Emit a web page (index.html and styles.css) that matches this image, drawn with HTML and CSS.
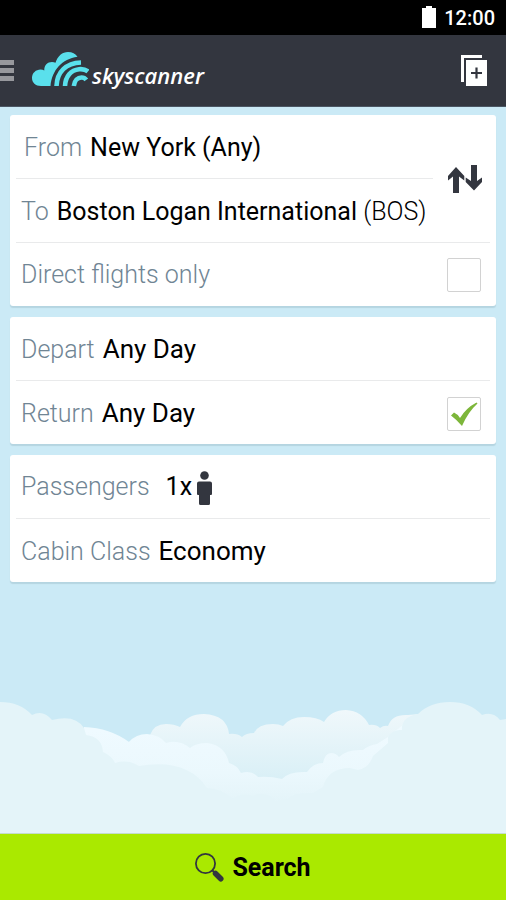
FILE: index.html
```html
<!DOCTYPE html>
<html lang="en">
<head>
<meta charset="utf-8">
<meta name="viewport" content="width=device-width, initial-scale=1">
<title>Skyscanner flight search</title>
<link rel="stylesheet" href="styles.css">
</head>
<body>
<div class="status">
  <svg class="battery" width="14" height="22" viewBox="0 0 14 22" aria-hidden="true"><path d="M4 0h6v2h4v20H0V2h4z" fill="#fff"/></svg>
  <time>12:00</time>
</div>
<header class="appbar">
  <button class="menu" type="button" aria-label="Menu"><span></span><span></span><span></span></button>
  <a class="brand" href="#">
    <svg width="57" height="36" viewBox="0 0 57 36" aria-hidden="true">
      <path d="M9 35C3.500 35 0 31.500 0 27c0-5 4-8.500 8.500-8.500 1.500 0 2.700.300 3.800.900C12 14.500 15.500 11 20 11c1.300 0 2.500.300 3.500.800C25.500 5 30.500 1 36 1c4.200 0 7.600 1.800 9.500 4.700C30 8 20 19 18.500 35z" fill="#5ae0ec"/>
      <g fill="none" stroke="#5ae0ec" stroke-width="4.600">
        <path d="M24.500 35C25 21 34 12 49 11.500"/>
        <path d="M33 35c.500-9.500 6-16 14-16.800 4-.400 7 .600 9 2.300"/>
        <path d="M41.800 35c.700-5.500 4-8.500 7.700-8.500 2 0 3.600.700 4.800 2.400"/>
      </g>
    </svg>
    <span>skyscanner</span>
  </a>
  <button class="add" type="button" aria-label="New search">
    <svg width="26" height="32" viewBox="0 0 26 32" aria-hidden="true">
      <path d="M0 0h21v3H3v24H0z" fill="#fff"/><path d="M5 5h21v26H5z" fill="#fff"/>
      <path d="M15.500 12.500v11M10 18h11" stroke="#33363f" stroke-width="2.200"/>
    </svg>
  </button>
</header>
<main>
  <section class="card route">
    <button class="row from" type="button"><span class="label">From</span> <span class="value">New York (Any)</span></button>
    <button class="row to" type="button"><span class="label">To</span> <span class="value">Boston Logan International <span class="code">(BOS)</span></span></button>
    <button class="swap" type="button" aria-label="Swap origin and destination">
      <svg width="34" height="28" viewBox="0 0 34 28" fill="#33363f" aria-hidden="true">
        <path d="M8 2l8.300 9v4.500L11 11.500V28H5V11.500L0 15.500V11z"/>
        <path d="M26 25.500l-8.300-8.500v-4.500L23 16V0h6v16l5-3.500V17z"/>
      </svg>
    </button>
    <label class="row direct"><span class="label">Direct flights only</span><input type="checkbox"></label>
  </section>
  <section class="card">
    <button class="row" type="button"><span class="label">Depart</span> <span class="value">Any Day</span></button>
    <div class="row split">
      <button class="plain" type="button"><span class="label">Return</span> <span class="value">Any Day</span></button>
      <input type="checkbox" checked aria-label="Return flight">
    </div>
  </section>
  <section class="card">
    <button class="row" type="button"><span class="label">Passengers</span> <span class="value count">1x</span>
      <svg class="person" width="15" height="34" viewBox="0 0 15 34" fill="#33363f" aria-hidden="true"><circle cx="7.500" cy="4.500" r="4.300"/><path d="M2 10.500h11q2 0 2 2V23q0 1-1 1h-1v8.500q0 1.500-1.500 1.500h-8Q2 34 2 32.500V24H1q-1 0-1-1V12.500q0-2 2-2z"/></svg>
    </button>
    <button class="row" type="button"><span class="label">Cabin Class</span> <span class="value">Economy</span></button>
  </section>
</main>
<svg class="clouds" viewBox="0 0 506 143" preserveAspectRatio="none" aria-hidden="true">
  <defs>
    <linearGradient id="back" gradientUnits="userSpaceOnUse" x1="0" y1="20" x2="0" y2="92"><stop offset="0" stop-color="#f0f8fb"/><stop offset="1" stop-color="#d8eff6"/></linearGradient>
    <linearGradient id="mid" gradientUnits="userSpaceOnUse" x1="0" y1="40" x2="0" y2="112"><stop offset="0" stop-color="#effaff"/><stop offset=".600" stop-color="#ebf8fd"/><stop offset="1" stop-color="#e4f4f9"/></linearGradient>
  </defs>
  <path fill="url(#back)" d="M128 100V52L150 45Q154 34 166 34Q174 34 180 37Q187 24 204 24Q227 25 229 44Q237 43 242 47Q246 43 254 43Q258 34 273 34Q279 34 283 36Q290 27 304 27Q317 27 324 32Q331 20 346 20Q362 21 369 35Q376 34 380 38Q384 35 388 36Q392 24 408 25L420 24V100Z"/>
  <path fill="url(#mid)" d="M84 37Q110 38 129 52Q136 44 147 44Q160 45 166 53Q179 49 190 58Q196 53 207 53Q225 55 229 73Q237 75 241 83Q252 80 258 87Q270 86 282 89Q289 81 307 82Q313 73 323 73Q325 63 331 63Q336 63 339 67Q347 59 363 60Q369 55 377 54Q383 50 388 47L404 34V143H84Z"/>
  <path fill="#e4f4f9" d="M0 12Q20 12 32 25Q43 19 52 30Q75 24 84 38L86 45Q102 47 103 62Q112 66 115 73Q128 69 139 76Q187 68 207 98Q224 99 232 109Q242 102 253 106Q261 101 272 107L275 111L288 109Q293 102 313 103L323 97Q328 78 350 78L358 80Q369 78 373 66L388 53V47Q393 39 402 40Q401 27 418 24Q430 12 450 12Q470 12 482 25Q493 21 500 30L506 29V143H0Z"/>
</svg>
<button class="search" type="submit">
  <svg width="29" height="29" viewBox="0 0 29 29" fill="none" stroke="#33363f" aria-hidden="true"><circle cx="10.500" cy="10.500" r="9.600" stroke-width="1.800"/><path d="M17 17l4 4" stroke-width="2"/><path d="M20.500 20.500l5.300 5.300" stroke-width="5.500" stroke-linecap="round"/></svg>
  <span>Search</span>
</button>
</body>
</html>
```
FILE: styles.css
```css
* { box-sizing: border-box; }

body {
  margin: 0;
  min-height: 100vh;
  display: flex;
  flex-direction: column;
  background: #cbeaf6;
  font-family: Roboto, "Liberation Sans", sans-serif;
  color: #000;
}

button {
  font: inherit;
  color: inherit;
  border: 0;
  padding: 0;
  background: none;
  text-align: left;
  cursor: pointer;
}

svg { display: block; flex: none; }

.status {
  height: 35px;
  display: flex;
  align-items: center;
  justify-content: flex-end;
  gap: 8px;
  padding: 0 11px;
  background: #000;
  color: #fff;
  font-size: 20px;
  font-weight: 500;
}

.battery { margin-bottom: 2px; }

.appbar {
  height: 72px;
  display: flex;
  align-items: center;
  padding-right: 19px;
  background: #33363f;
  border-bottom: 1px solid #4b5663;
}

.menu {
  display: grid;
  gap: 3px;
  width: 14px;
}

.menu span { height: 5px; background: #97989d; }

.brand {
  display: flex;
  align-items: center;
  gap: 3px;
  margin-left: 18px;
  padding-bottom: 3px;
  color: #fff;
  text-decoration: none;
  font: italic 600 22px/30px "Open Sans", sans-serif;
}

.brand span { padding-top: 12px; }

.add { margin-left: auto; }

main {
  display: grid;
  gap: 11px;
  padding: 8px 10px;
}

.card {
  background: #fff;
  border-radius: 3px;
  box-shadow: 0 2px 1px #b5d5e1;
  font-size: 26px;
  line-height: 32px;
  padding: 0 6px;
}

.row {
  display: flex;
  flex-wrap: wrap;
  align-content: center;
  align-items: baseline;
  width: 100%;
  min-height: 64px;
  padding: 2px 9px 0 5px;
  gap: 8px;
  border-bottom: 1px solid #e9eaeb;
}

.row:last-child { min-height: 63px; border-bottom: 0; }

.label { font-size: 25px; font-weight: 300; color: #708594; }
.value { font-weight: 400; }
.code { font-weight: 300; }

.route {
  display: grid;
  grid-template-columns: 1fr 57px;
  font-size: 25px;
}

.route .row { padding-top: 3px; padding-right: 0; }
.route .from { padding-left: 8px; }
.to, .direct { grid-column: 1 / -1; }
.swap { grid-area: 1 / 2 / 3 / 3; justify-self: end; margin-right: 8px; z-index: 1; }
.to { grid-row: 2; }
.route .direct { align-items: center; justify-content: space-between; padding-right: 9px; padding-top: 1px; }

.split { align-items: center; justify-content: space-between; }
.plain { display: flex; align-items: baseline; gap: 8px; }

.count { margin-left: 8px; font-size: 25px; }
.person { align-self: center; margin-left: -3px; }

input[type="checkbox"] {
  appearance: none;
  flex: none;
  width: 34px;
  height: 34px;
  margin: 0;
  border: 1px solid #d2d2d2;
  border-radius: 2px;
  background: #fff;
}

input[type="checkbox"]:checked {
  background: #fff url("data:image/svg+xml,%3Csvg xmlns='http://www.w3.org/2000/svg' viewBox='0 0 32 32'%3E%3Cpath d='M3 17.500L6 14.500Q9.500 16 12 20Q18 10 28.500 4.500L29.500 5.500Q20 14 14 28Q9 22 3 17.500Z' fill='%237db63a'/%3E%3C/svg%3E") center / 32px 32px no-repeat;
}

.clouds {
  width: 100%;
  height: 143px;
  margin-top: auto;
}

.search {
  display: flex;
  align-items: center;
  justify-content: center;
  gap: 8px;
  height: 67px;
  background: #aae900;
  border-top: 1px solid #c4dccb;
  font-size: 25px;
  font-weight: 700;
}
```
